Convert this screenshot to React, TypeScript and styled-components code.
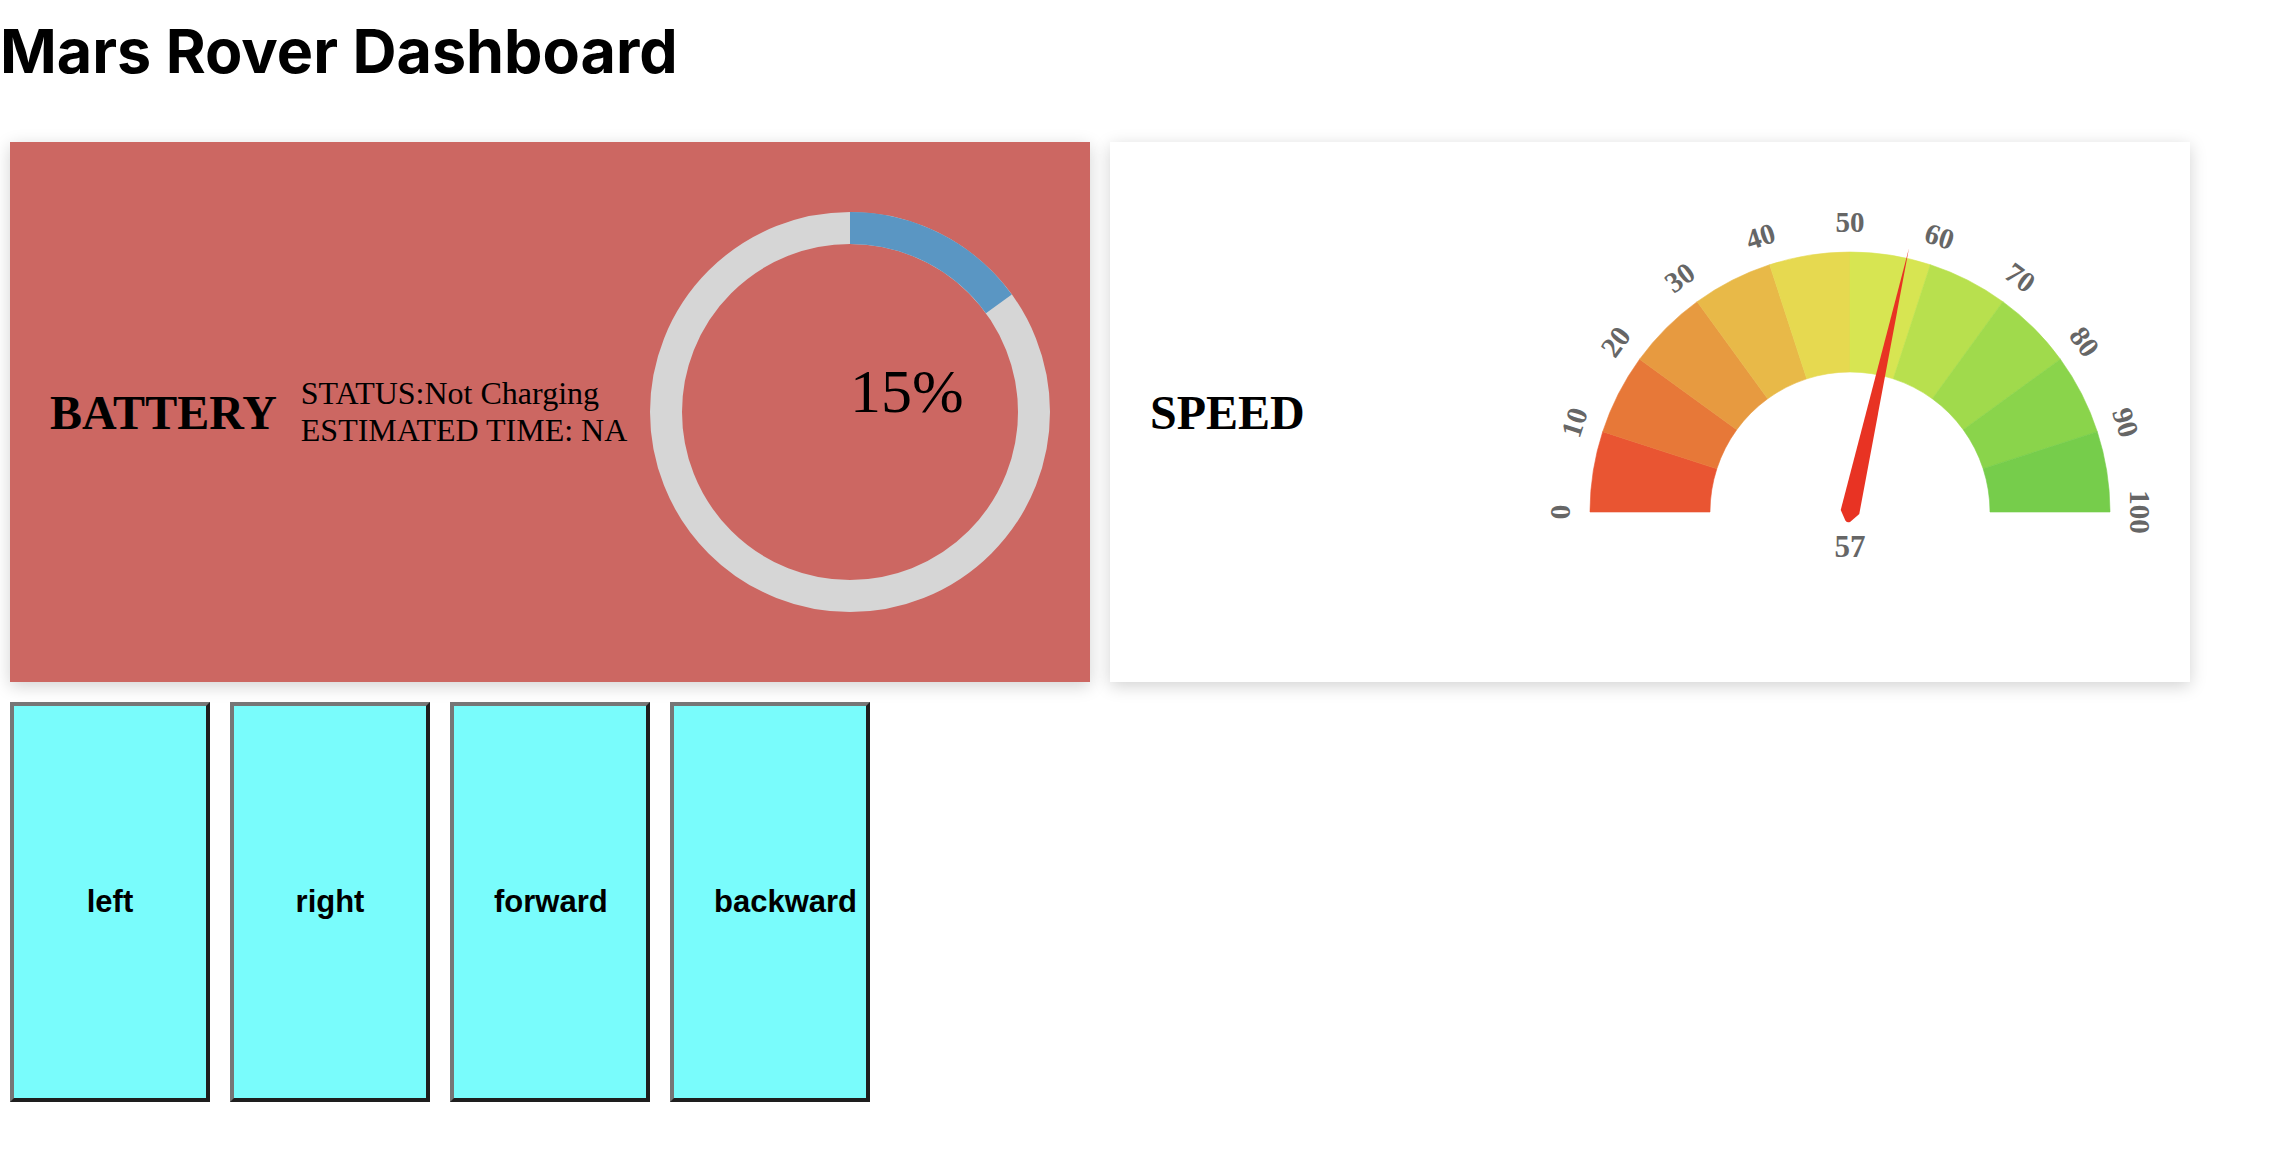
import styled, { createGlobalStyle } from "styled-components";

const GlobalStyle = createGlobalStyle`
  body {
    margin: 0;
    background: #ffffff;
    font-family: "Liberation Serif", "Times New Roman", serif;
    color: #000000;
  }
`;

const Page = styled.div`
  width: 100%;
`;

const Title = styled.h1`
  margin: 21px 0 0;
  font-family: Inter, "Liberation Sans", Arial, sans-serif;
  font-weight: 700;
  font-size: 61px;
  line-height: 1;
`;

const CardRow = styled.div`
  display: flex;
  gap: 20px;
  padding: 0 10px;
  margin-top: 60px;
`;

const Card = styled.section<{ $bg: string }>`
  box-sizing: border-box;
  width: 1080px;
  height: 540px;
  padding: 0 40px;
  display: flex;
  align-items: center;
  background: ${(props) => props.$bg};
  box-shadow: 0 4px 16px rgba(0, 0, 0, 0.18);
`;

const CardLabel = styled.h2`
  margin: 0;
  font-family: "Liberation Serif", "Times New Roman", serif;
  font-weight: 700;
  font-size: 48px;
`;

const StatusBlock = styled.div`
  margin-left: 24px;
  font-size: 32px;
  line-height: normal;
`;

const ChartSvg = styled.svg`
  margin-left: auto;
  display: block;
  flex-shrink: 0;
  overflow: visible;
`;

const Controls = styled.div`
  display: flex;
  gap: 20px;
  padding: 0 10px;
  margin-top: 20px;
`;

const ControlButton = styled.button`
  box-sizing: border-box;
  width: 200px;
  height: 400px;
  padding: 0 40px;
  background: #79fcfc;
  border: 4px solid;
  border-color: #767676 #1e1e1e #1e1e1e #767676;
  font-family: "Liberation Sans", Arial, sans-serif;
  font-weight: 700;
  font-size: 31px;
  color: #000000;
  white-space: nowrap;
  cursor: pointer;
`;

const battery = { level: 15, status: "Not Charging", eta: "NA" };
const speed = 57;

const gaugeColors = [
  "#e95532",
  "#e77838",
  "#e79a40",
  "#e8b948",
  "#e6d950",
  "#d7e552",
  "#b8e04e",
  "#a0da4c",
  "#8ad44b",
  "#76cd4b",
];

const polar = (cx: number, cy: number, r: number, deg: number) => {
  const rad = (deg * Math.PI) / 180;
  return [cx + r * Math.cos(rad), cy - r * Math.sin(rad)];
};

const BatteryDonut = ({ level }: { level: number }) => {
  const r = 184;
  const end = (level / 100) * 360;
  const rad = (end * Math.PI) / 180;
  const x = 200 + r * Math.sin(rad);
  const y = 200 - r * Math.cos(rad);
  return (
    <ChartSvg width="400" height="400" viewBox="0 0 400 400">
      <circle cx="200" cy="200" r={r} fill="none" stroke="#d6d6d6" strokeWidth="32" />
      <path
        d={`M 200 ${200 - r} A ${r} ${r} 0 ${end > 180 ? 1 : 0} 1 ${x} ${y}`}
        fill="none"
        stroke="#5a96c3"
        strokeWidth="32"
      />
      <text x="200" y="200" fontSize="62" fontFamily="Liberation Serif, serif" fill="#000">
        {level}%
      </text>
    </ChartSvg>
  );
};

const SpeedGauge = ({ value }: { value: number }) => {
  const cx = 300;
  const cy = 300;
  const outer = 260;
  const inner = 140;
  const step = 180 / gaugeColors.length;
  const angle = (value / 100) * 180 - 90;
  return (
    <ChartSvg width="600" height="400" viewBox="0 0 600 400">
      {gaugeColors.map((color, i) => {
        const a0 = 180 - step * i;
        const a1 = 180 - step * (i + 1);
        const [ox0, oy0] = polar(cx, cy, outer, a0);
        const [ox1, oy1] = polar(cx, cy, outer, a1);
        const [ix1, iy1] = polar(cx, cy, inner, a1);
        const [ix0, iy0] = polar(cx, cy, inner, a0);
        return (
          <path
            key={color}
            d={`M ${ox0} ${oy0} A ${outer} ${outer} 0 0 1 ${ox1} ${oy1} L ${ix1} ${iy1} A ${inner} ${inner} 0 0 0 ${ix0} ${iy0} Z`}
            fill={color}
            stroke={color}
            strokeWidth="0.6"
          />
        );
      })}
      <path
        d="M -9.5 0 L 0 -270 L 9.5 0 L 2.5 9.5 Q 0 11.5 -2.5 9.5 Z"
        transform={`translate(${cx} ${cy}) rotate(${angle})`}
        fill="#e83323"
      />
      {Array.from({ length: 11 }, (_, i) => (
        <text
          key={i}
          x={cx}
          y={cy - 280}
          transform={`rotate(${-90 + i * 18} ${cx} ${cy})`}
          textAnchor="middle"
          fontSize="29"
          fontWeight="700"
          fontFamily="Liberation Serif, serif"
          fill="#666"
        >
          {i * 10}
        </text>
      ))}
      <text
        x={cx}
        y={cy + 45}
        textAnchor="middle"
        fontSize="31"
        fontWeight="700"
        fontFamily="Liberation Serif, serif"
        fill="#666"
      >
        {value}
      </text>
    </ChartSvg>
  );
};

const App = () => {
  const moves = ["left", "right", "forward", "backward"];
  return (
    <Page>
      <GlobalStyle />
      <Title>Mars Rover Dashboard</Title>
      <CardRow>
        <Card $bg="#cc6762">
          <CardLabel>BATTERY</CardLabel>
          <StatusBlock>
            <div>STATUS:{battery.status}</div>
            <div>ESTIMATED TIME: {battery.eta}</div>
          </StatusBlock>
          <BatteryDonut level={battery.level} />
        </Card>
        <Card $bg="#ffffff">
          <CardLabel>SPEED</CardLabel>
          <SpeedGauge value={speed} />
        </Card>
      </CardRow>
      <Controls>
        {moves.map((m) => (
          <ControlButton key={m}>{m}</ControlButton>
        ))}
      </Controls>
    </Page>
  );
};

export default App;
